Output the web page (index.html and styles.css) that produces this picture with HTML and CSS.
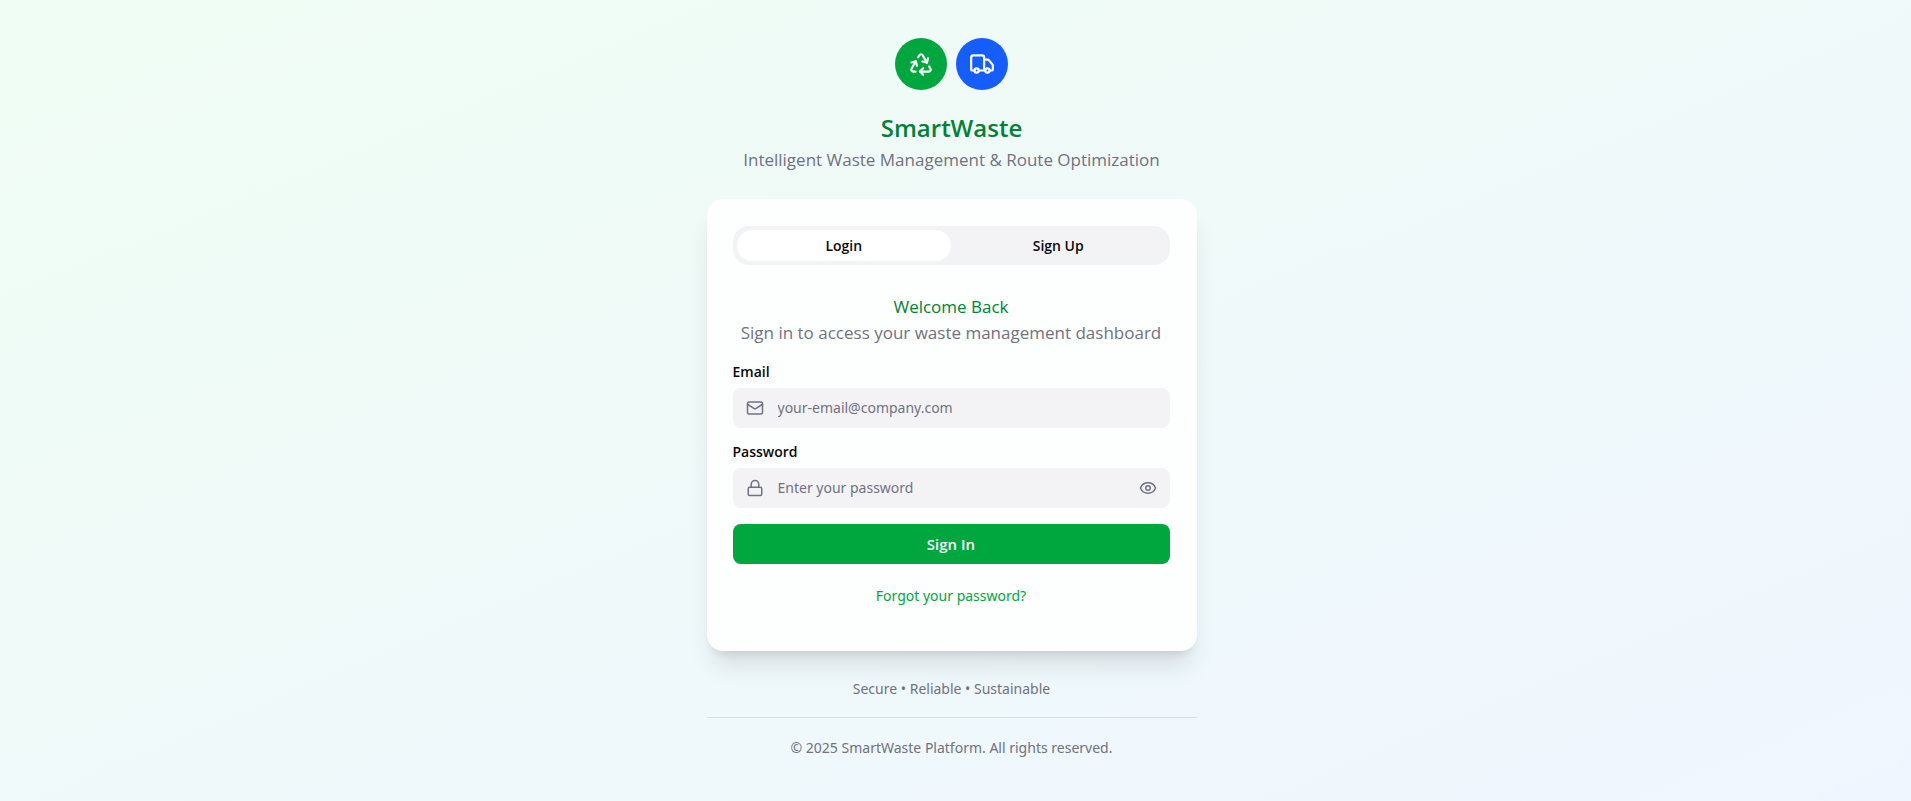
FILE: index.html
```html
<!DOCTYPE html>
<html lang="en">
<head>
<meta charset="utf-8">
<meta name="viewport" content="width=device-width, initial-scale=1">
<title>SmartWaste</title>
<link rel="stylesheet" href="styles.css">
</head>
<body>
<div class="page">
  <header class="brand">
    <div class="brand-icons">
      <span class="badge badge-green">
        <svg class="icon-lg" viewBox="0 0 24 24" aria-hidden="true"><path d="M7 19H4.815a1.83 1.83 0 0 1-1.57-.881 1.785 1.785 0 0 1-.004-1.784L7.196 9.5"/><path d="M11 19h8.203a1.83 1.83 0 0 0 1.556-.89 1.784 1.784 0 0 0 0-1.775l-1.226-2.12"/><path d="m14 16-3 3 3 3"/><path d="M8.293 13.596 7.196 9.5 3.1 10.598"/><path d="m9.344 5.811 1.093-1.892A1.83 1.83 0 0 1 11.985 3a1.784 1.784 0 0 1 1.546.888l3.943 6.843"/><path d="m13.378 9.633 4.096 1.098 1.097-4.096"/></svg>
      </span>
      <span class="badge badge-blue">
        <svg class="icon-lg" viewBox="0 0 24 24" aria-hidden="true"><path d="M14 18V6a2 2 0 0 0-2-2H4a2 2 0 0 0-2 2v11a1 1 0 0 0 1 1h2"/><path d="M15 18H9"/><path d="M19 18h2a1 1 0 0 0 1-1v-3.650a1 1 0 0 0-.22-.624l-3.480-4.350A1 1 0 0 0 17.520 8H14"/><circle cx="17" cy="18" r="2"/><circle cx="7" cy="18" r="2"/></svg>
      </span>
    </div>
    <h1 class="brand-name">SmartWaste</h1>
    <p class="lead">Intelligent Waste Management &amp; Route Optimization</p>
  </header>

  <main class="card">
    <div class="tabs" role="tablist">
      <button class="tab tab-active" type="button" role="tab" aria-selected="true">Login</button>
      <button class="tab" type="button" role="tab" aria-selected="false">Sign Up</button>
    </div>
    <div class="intro">
      <h2 class="welcome">Welcome Back</h2>
      <p class="lead">Sign in to access your waste management dashboard</p>
    </div>
    <form class="form">
      <div class="field">
        <label class="label" for="email">Email</label>
        <div class="control">
          <svg class="icon" viewBox="0 0 24 24" aria-hidden="true"><path d="m22 7-8.991 5.727a2 2 0 0 1-2.009 0L2 7"/><rect x="2" y="4" width="20" height="16" rx="2"/></svg>
          <input class="input" id="email" type="email" placeholder="your-email@company.com">
        </div>
      </div>
      <div class="field">
        <label class="label" for="password">Password</label>
        <div class="control">
          <svg class="icon" viewBox="0 0 24 24" aria-hidden="true"><rect width="18" height="11" x="3" y="11" rx="2"/><path d="M7 11V7a5 5 0 0 1 10 0v4"/></svg>
          <input class="input" id="password" type="password" placeholder="Enter your password">
          <button class="reveal" type="button" aria-label="Show password">
            <svg class="icon" viewBox="0 0 24 24" aria-hidden="true"><path d="M2.062 12.348a1 1 0 0 1 0-.696 10.750 10.750 0 0 1 19.876 0 1 1 0 0 1 0 .696 10.750 10.750 0 0 1-19.876 0"/><circle cx="12" cy="12" r="3"/></svg>
          </button>
        </div>
      </div>
      <button class="submit" type="submit">Sign In</button>
    </form>
    <a class="forgot" href="#">Forgot your password?</a>
  </main>

  <footer class="footer">
    <p class="values">Secure • Reliable • Sustainable</p>
    <p class="legal">© 2025 SmartWaste Platform. All rights reserved.</p>
  </footer>
</div>
</body>
</html>
```
FILE: styles.css
```css
* { box-sizing: border-box; margin: 0; }

body {
  min-height: 100vh;
  padding-right: 8px;
  background: linear-gradient(to bottom right, #f0fdf4, #eff6ff);
  color: #0a0a0a;
  font-family: "Segoe UI", "Noto Sans", "Open Sans", sans-serif;
  font-size: 14px;
  line-height: 22px;
}

button, input { font: inherit; color: inherit; border: 0; }

svg {
  fill: none;
  stroke: currentColor;
  stroke-width: 2;
  stroke-linecap: round;
  stroke-linejoin: round;
}

.page {
  max-width: 490px;
  margin: 0 auto;
  padding: 38px 0 24px;
}

.brand { text-align: center; margin-bottom: 26px; }

.brand-icons {
  display: flex;
  justify-content: center;
  gap: 9px;
  margin-bottom: 19px;
}

.badge {
  display: grid;
  place-items: center;
  width: 52px;
  height: 52px;
  border-radius: 50%;
  color: #fff;
}
.badge-green { background: #00a63e; }
.badge-blue { background: #155dfc; }
.icon-lg { width: 26px; height: 26px; }

.brand-name,
.tab,
.label,
.submit {
  font-family: "Segoe UI", "Open Sans", sans-serif;
  font-weight: 600;
}

.brand-name {
  color: #008236;
  font-size: 24px;
  line-height: 38px;
}

.lead,
.welcome {
  font-family: "Segoe UI", "Open Sans", sans-serif;
  font-size: 17px;
  font-weight: 400;
  line-height: 26px;
}
.lead { color: #717182; }
.welcome { color: #008236; }

.card {
  display: flex;
  flex-direction: column;
  padding: 27px 27px 44px 26px;
  border-radius: 16px;
  background: #fcfffe;
  box-shadow: 0 20px 25px -5px rgba(0, 0, 0, 0.1), 0 8px 10px -6px rgba(0, 0, 0, 0.1);
}

.tabs {
  display: grid;
  grid-template-columns: 1fr 1fr;
  padding: 4px;
  border-radius: 16px;
  background: #f3f3f5;
}
.tab {
  padding: 0;
  height: 31px;
  border-radius: 16px;
  background: transparent;
}
.tab-active { background: #fff; }

.intro { margin: 29px 0 16px; text-align: center; }

.form { display: flex; flex-direction: column; gap: 14px; }
.field { display: flex; flex-direction: column; gap: 6px; }
.label { line-height: 20px; }

.control {
  display: flex;
  align-items: center;
  gap: 14px;
  height: 40px;
  padding: 0 13px;
  border-radius: 8px;
  background: #f3f3f5;
  color: #717182;
}
.icon { display: block; flex: none; width: 18px; height: 18px; }
.input {
  flex: 1;
  min-width: 0;
  padding: 0;
  outline: 0;
  background: transparent;
}
.input::placeholder { color: #717182; opacity: 1; }
.reveal { padding: 0; background: transparent; }

.submit {
  height: 40px;
  margin-top: 2px;
  border-radius: 8px;
  background: #00a63e;
  color: #fff;
  font-size: 15px;
}

.forgot {
  align-self: center;
  margin-top: 21px;
  color: #00a63e;
  text-decoration: none;
}

.footer { margin-top: 27px; color: #717182; text-align: center; }
.legal {
  margin-top: 17px;
  padding-top: 19px;
  border-top: 1px solid #d6dfe1;
}
```
